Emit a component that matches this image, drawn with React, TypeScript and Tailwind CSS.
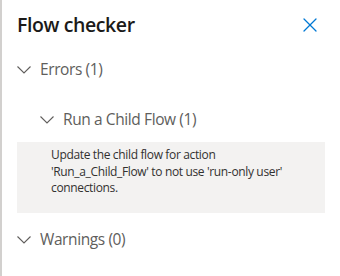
import { X } from 'lucide-react'

function Chevron() {
  return (
    <svg width="14" height="8" viewBox="0 0 14 8" className="shrink-0">
      <path d="M0.5 0.5 L7 7 L13.5 0.5" fill="none" stroke="#605e5c" strokeWidth="1.1" />
    </svg>
  )
}

function Section({ label, indent = false }: { label: string; indent?: boolean }) {
  return (
    <div className={`flex items-center gap-[9px] h-[20px] ${indent ? 'pl-[23px]' : ''}`}>
      <Chevron />
      <span className="text-[15.5px] tracking-[-0.4px] text-[#605e5c] leading-none">{label}</span>
    </div>
  )
}

export default function App() {
  return (
    <div
      className="w-[340px] h-[276px] bg-white border-l-2 border-[#d2d0ce] pl-[15px] pr-[15px] overflow-hidden"
      style={{ fontFamily: '"Segoe UI", "Open Sans", "Noto Sans", sans-serif' }}
    >
      <div className="flex items-center justify-between h-[26px] mt-[12px]">
        <h1 className="text-[19.5px] tracking-[-0.4px] font-semibold text-[#1b1a19] leading-none">Flow checker</h1>
        <X size={24} strokeWidth={1.3} color="#0078d4" className="mr-[3px]" />
      </div>
      <div className="mt-[22px]">
        <Section label="Errors (1)" />
      </div>
      <div className="mt-[30px]">
        <Section label="Run a Child Flow (1)" indent />
      </div>
      <div className="mt-[12px] bg-[#f3f2f1] w-[308px] h-[71px] pl-[34px] pr-[10px] pt-[5px] text-[12px] tracking-[-0.35px] leading-[16.5px] text-[#323130]">
        Update the child flow for action 'Run_a_Child_Flow' to not use 'run-only user' connections.
      </div>
      <div className="mt-[17px]">
        <Section label="Warnings (0)" />
      </div>
    </div>
  )
}
